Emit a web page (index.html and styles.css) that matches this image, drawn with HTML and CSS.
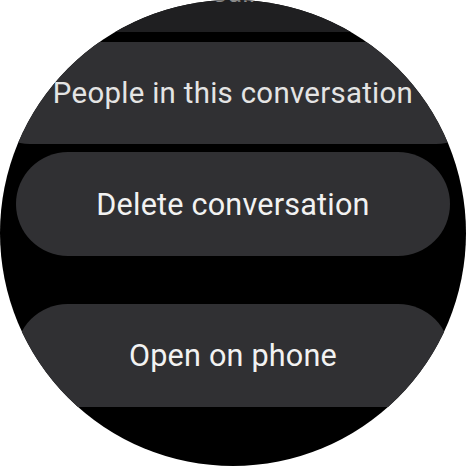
FILE: index.html
```html
<!DOCTYPE html>
<html>
<head>
<meta charset="utf-8">
<link rel="stylesheet" href="styles.css">
</head>
<body>
<div class="watch">
  <div class="list">
    <div class="chip chip-top"><span class="label label-top">Call</span></div>
    <div class="chip chip-wide"><span class="label label-wide">People in this conversation</span></div>
    <div class="chip chip-mid"><span class="label">Delete conversation</span></div>
    <div class="chip chip-bottom"><span class="label">Open on phone</span></div>
  </div>
</div>
</body>
</html>
```
FILE: styles.css
```css
html, body {
  margin: 0;
  padding: 0;
  background: #ffffff;
}
.watch {
  width: 466px;
  height: 466px;
  border-radius: 50%;
  background: #000000;
  overflow: hidden;
  font-family: Roboto, "Noto Sans", sans-serif;
}
.list {
  display: flex;
  flex-direction: column;
  align-items: center;
}
.chip {
  display: flex;
  align-items: center;
  justify-content: center;
  background: #303033;
  border-radius: 52px;
  flex: none;
}
.label {
  color: #f2f2f2;
  font-size: 30.6px;
  letter-spacing: 0.2px;
  white-space: nowrap;
}
.chip-top {
  width: 508px;
  height: 100px;
  margin-top: -68px;
  background: #1f1f21;
  border-radius: 0 0 50px 50px;
  align-items: flex-start;
}
.label-top {
  color: #8c8c8c;
  font-size: 26px;
  margin-top: 46px;
}
.chip-wide {
  width: 508px;
  height: 102px;
  margin-top: 10px;
  border-radius: 51px;
}
.label-wide {
  font-size: 29.4px;
  color: #e4e4e4;
  letter-spacing: 0.3px;
}
.chip-mid {
  width: 434px;
  height: 104px;
  margin-top: 8px;
}
.chip-bottom {
  width: 434px;
  height: 103px;
  margin-top: 48px;
}
```
